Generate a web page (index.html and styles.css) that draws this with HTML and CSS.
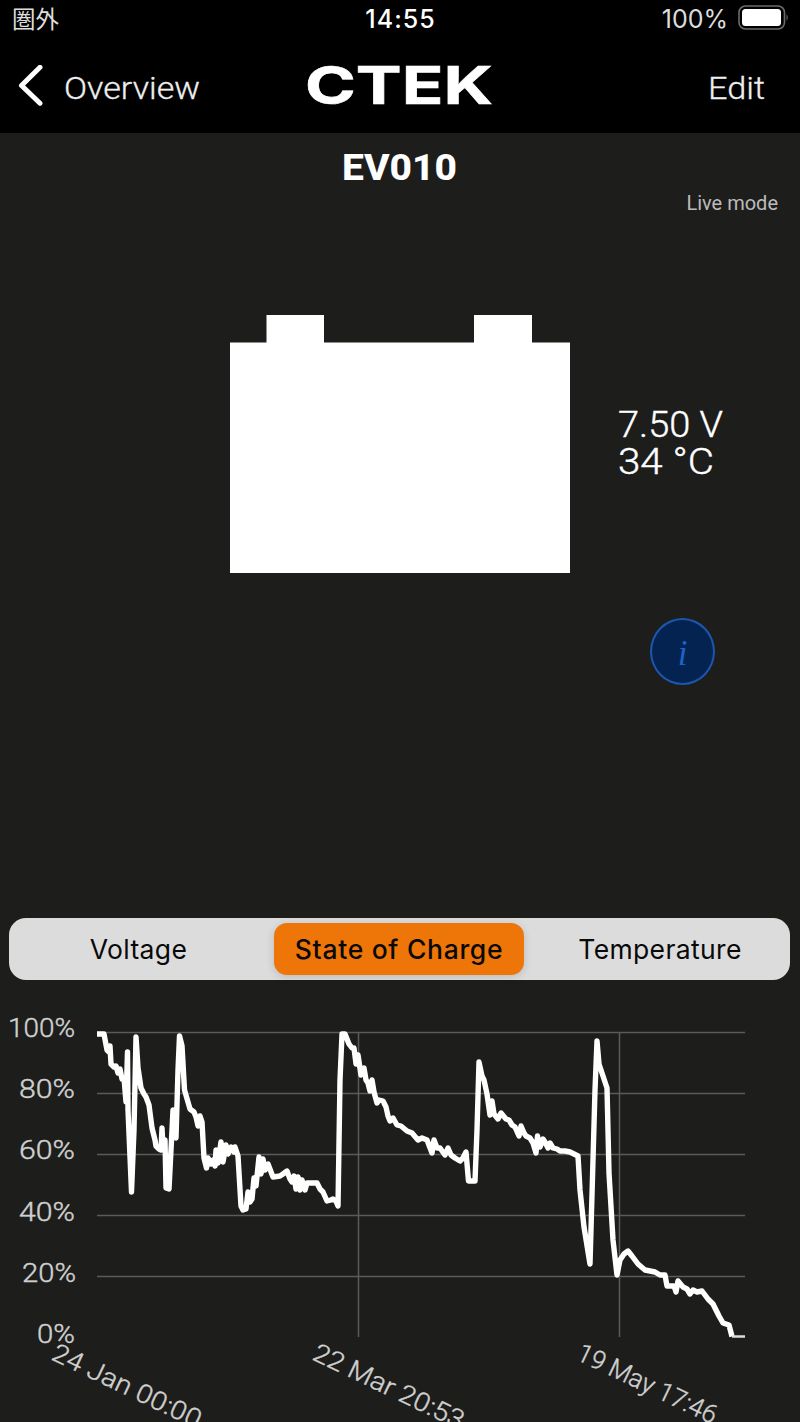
FILE: index.html
```
<!DOCTYPE html>
<html lang="en">

<head>
    <meta charset="UTF-8">
    <meta name="viewport" content="width=device-width, initial-scale=1.0">
    <title>CTEK - Battery</title>
    <link rel="stylesheet" href="styles.css">
</head>

<body>
    <div class="app">
        <header class="top">
            <div class="status-bar">
                <span class="carrier" lang="ja">圏外</span>
                <span class="clock">14:55</span>
                <div class="power">
                    <span>100%</span>
                    <svg width="51" height="26" viewBox="0 0 51 26">
                        <rect x="1" y="1" width="45.5" height="23" rx="6.5" fill="none" stroke="#6b6b6b" stroke-width="1.6" />
                        <rect x="4" y="4" width="39" height="17" rx="3.5" fill="#fff" />
                        <path d="M48.5 9q2.5 3.5 0 7z" fill="#6b6b6b" />
                    </svg>
                </div>
            </div>
            <nav class="nav-bar">
                <a class="back">
                    <svg width="26" height="42" viewBox="0 0 26 42">
                        <path d="M22 7.200L3.500 25.500L22 43.200" transform="translate(0 -5)" fill="none" stroke="#fff" stroke-width="5" stroke-linecap="round" stroke-linejoin="round" />
                    </svg>
                    <svg class="nav-text" width="136" height="42">
                        <text x="0" y="33.500" textLength="136" lengthAdjust="spacingAndGlyphs">Overview</text>
                    </svg>
                </a>
                <svg class="logo" width="190" height="42">
                    <text x="7" y="39" textLength="188" lengthAdjust="spacingAndGlyphs">CTEK</text>
                </svg>
                <svg class="nav-text edit" width="60" height="42">
                    <text x="0" y="33.500" textLength="57" lengthAdjust="spacingAndGlyphs">Edit</text>
                </svg>
            </nav>
        </header>

        <main>
            <h1>
                <svg class="title" width="116" height="40">
                    <text x="0" y="33" textLength="115" lengthAdjust="spacingAndGlyphs">EV010</text>
                </svg>
            </h1>
            <p class="mode">Live mode</p>

            <section class="battery-row">
                <svg class="battery" width="340" height="258" viewBox="0 0 340 258">
                    <path d="M0 27.500H36.500V0H94V27.500H244V0H302V27.500H340V258H0z" fill="#fff" />
                </svg>
                <svg class="readings" width="120" height="258">
                    <text x="-1" y="122" textLength="105" lengthAdjust="spacingAndGlyphs">7.50 V</text>
                    <text x="-1" y="158.500" textLength="96" lengthAdjust="spacingAndGlyphs">34 °C</text>
                </svg>
            </section>

            <button class="info">i</button>

            <div class="tabs">
                <button class="tab">Voltage</button>
                <button class="tab active">State of Charge</button>
                <button class="tab">Temperature</button>
            </div>

            <svg class="chart" width="800" height="432" viewBox="0 990 800 432">
                <g class="grid">
                    <path d="M97 1032.500H745M97 1093.500H745M97 1154.500H745M97 1215.500H745M97 1276.500H745" />
                    <path d="M358.500 1032V1337M619.500 1032V1337" />
                </g>
                <g class="y-axis">
                    <text x="8" y="1036.500" textLength="67" lengthAdjust="spacingAndGlyphs">100%</text>
                    <text x="19" y="1097.500" textLength="56" lengthAdjust="spacingAndGlyphs">80%</text>
                    <text x="19" y="1158.500" textLength="56" lengthAdjust="spacingAndGlyphs">60%</text>
                    <text x="19" y="1220.500" textLength="56" lengthAdjust="spacingAndGlyphs">40%</text>
                    <text x="22" y="1281.500" textLength="54" lengthAdjust="spacingAndGlyphs">20%</text>
                    <text x="37" y="1342.500" textLength="38" lengthAdjust="spacingAndGlyphs">0%</text>
                </g>
                <g class="x-axis">
                    <text transform="translate(50 1359) rotate(25.500)" textLength="162" lengthAdjust="spacingAndGlyphs">24 Jan 00:00</text>
                    <text transform="translate(311 1359) rotate(25.500)" textLength="164" lengthAdjust="spacingAndGlyphs">22 Mar 20:53</text>
                    <text transform="translate(575 1359) rotate(25.500)" textLength="152" lengthAdjust="spacingAndGlyphs">19 May 17:46</text>
                </g>
                <polyline class="series" points="97,1034 104,1034 107,1050 109,1052 110,1046 111,1064 114,1067 116,1066 118,1073 120,1069 122,1079 124,1078 126,1102 127.500,1052 128,1110 131.500,1192 134,1130 136,1037 138,1068 141,1088 144,1094 146,1097 149,1105 152,1128 155,1140 156,1146 159,1149 161,1150 162,1128 163,1149 165,1140 166,1188 169,1189 172,1130 173,1110 176,1138 178,1070 179.500,1036 182,1046 184.500,1090 190,1109 194,1112 196,1117 198,1126 200,1116 202,1122 204,1158 206.500,1168 208,1158 211,1164 213,1160 215,1166 216,1150 218,1163 221,1142 223,1162 226,1145 228,1154 231,1147 234,1152 235,1147 238,1156 241,1206 243,1210 246,1209 248,1192 250,1202 252,1199 254,1178 256,1186 259,1157 261,1174 263,1159 265,1170 268,1164 273,1177 280,1176 283,1174 287,1171 290,1179 292,1182 294,1176 296,1189 298,1177 300,1190 302,1180 305,1190 307,1183 310,1183 317,1183 320,1189 323,1192 327,1201 331,1200 333,1199 336,1201 338,1206 340,1080 342,1034 345,1034 349,1044 352,1048 354,1048 356,1064 358,1055 361,1075 364,1068 366,1080 368,1083 370,1091 372,1080 374,1092 377,1103 379,1100 383,1101 386,1107 388,1116 390,1121 393,1118 397,1125 401,1126 407,1131 412,1133 418,1140 422,1138 427,1140 432,1153 434,1140 437,1148 440,1148 445,1155 448,1148 451,1155 455,1158 460,1161 463,1158 466,1152 468.500,1181 475,1181 477,1130 479,1062 482,1076 484,1080 487,1094 490,1115 492,1101 494,1114 498,1119 501,1113 506,1119 509,1120 512,1125 515,1127 519,1136 521,1126 524,1133 526,1136 530,1138 533,1143 536,1153 537.500,1136 540,1147 543,1139 545,1142 548,1148 550,1143 553,1148 557,1149 560,1151 565,1151 570,1152 578,1156 580,1190 584,1227 590,1264 593,1160 595,1090 597,1041 599,1064 607,1088 609,1173 613,1240 617,1275 620,1260 624,1254 628,1251 632,1256 638,1264 645,1270 655,1272 660,1275 665,1275 667,1286 674,1286 676,1292 678,1281 683,1287 687,1289 690,1294 693,1290 697,1292 702,1291 708,1299 713,1304 719,1316 723,1323 729,1325 732,1336.500" />
                <path class="series-end" d="M732 1336.500H745" />
            </svg>
        </main>
    </div>
</body>

</html>
```
FILE: styles.css
```
body {
    background: #1d1d1b;
    color: white;
    font-family: Roboto, sans-serif;
    margin: 0;
}

.app {
    width: 800px;
    height: 1422px;
    overflow: hidden;
}

.top {
    height: 133px;
    background: black;
}

.status-bar {
    display: grid;
    grid-template-columns: 1fr auto 1fr;
    align-items: center;
    height: 37px;
    padding: 0 11px 0 12px;
    font-family: Inter, sans-serif;
    font-size: 25px;
}

.carrier {
    font-family: "Noto Sans CJK JP", sans-serif;
    font-size: 23.5px;
    line-height: 34px;
    margin-top: -2px;
    color: #ddd;
}

.clock {
    font-weight: 500;
    letter-spacing: 1px;
}

.power {
    display: flex;
    align-items: center;
    justify-content: flex-end;
    gap: 10px;
    color: #ddd;
}

.power svg {
    margin-top: -2px;
}

.nav-bar {
    display: grid;
    grid-template-columns: 1fr auto 1fr;
    padding: 28px 32px 0 18px;
}

.back {
    display: flex;
    gap: 20px;
}

.nav-text {
    fill: #eee;
    stroke: #eee;
    stroke-width: 0.3;
    font-size: 31.5px;
    font-weight: 300;
    overflow: visible;
}

.edit {
    justify-self: end;
}

.logo {
    fill: white;
    stroke: white;
    stroke-width: 0.6;
    font-family: Inter, sans-serif;
    font-size: 52px;
    font-weight: 700;
    overflow: visible;
}

main {
    display: flex;
    flex-direction: column;
}

h1 {
    display: flex;
    justify-content: center;
    margin: 14px 0 0;
}

.title {
    fill: white;
    font-size: 36px;
    font-weight: 800;
    overflow: visible;
}

.mode {
    margin: 4px 22px 0;
    font-size: 20px;
    line-height: 24px;
    text-align: right;
    color: #bbb;
}

.battery-row {
    display: flex;
    gap: 49px;
    margin: 100px 0 0 230px;
}

.readings {
    fill: white;
    stroke: white;
    stroke-width: 0.4;
    font-size: 37px;
    font-weight: 300;
    overflow: visible;
}

.info {
    align-self: flex-end;
    box-sizing: border-box;
    width: 65px;
    height: 67px;
    margin: 45px 85px 0 0;
    padding: 4px 0 0;
    border: 2px solid #1c56b0;
    border-radius: 50%;
    background: #052350;
    color: #1c62c9;
    font: italic 35px "Liberation Serif", serif;
}

.tabs {
    display: grid;
    grid-template-columns: 259px 262px 260px;
    height: 62px;
    margin: 233px 10px 0 9px;
    border-radius: 17px;
    background: #dcdcdc;
}

.tab {
    padding: 0;
    border: none;
    background: none;
    color: #090909;
    font: 26.5px Inter, sans-serif;
    letter-spacing: 0.35px;
}

.tab.active {
    margin: 5px 6px;
    border-radius: 13px;
    background: #ee7608;
    box-shadow: 0 2px 8px rgba(0, 0, 0, 0.15);
    font-weight: 500;
    letter-spacing: 0.7px;
}

.chart {
    display: block;
    margin-top: 10px;
}

.grid {
    fill: none;
    stroke: #5b5b59;
    stroke-width: 1.5;
}

.y-axis,
.x-axis {
    fill: #d0d0d0;
    stroke: #d0d0d0;
    stroke-width: 0.4;
    font-size: 26px;
    font-weight: 300;
}

.series {
    fill: none;
    stroke: white;
    stroke-width: 5.4;
    stroke-linejoin: round;
}

.series-end {
    stroke: #ddd;
    stroke-width: 2.5;
}
```
